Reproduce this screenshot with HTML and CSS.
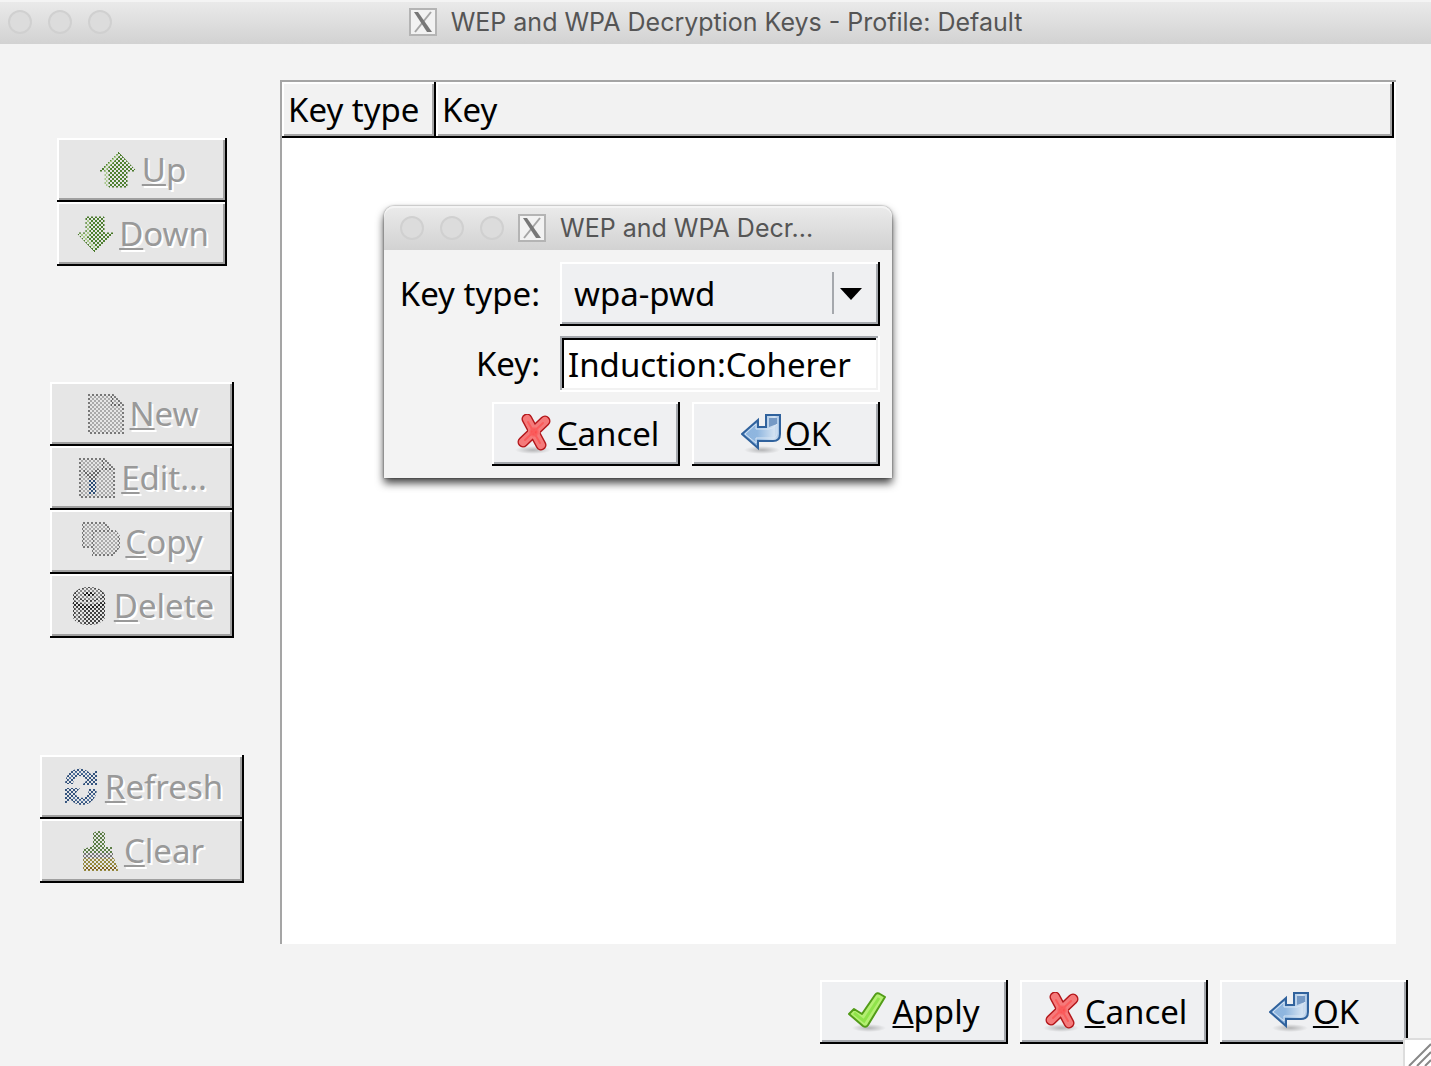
FILE: index.html
```html
<!DOCTYPE html>
<html lang="en">
<head>
    <meta charset="UTF-8">
    <meta name="viewport" content="width=device-width, initial-scale=1.0">
    <title>WEP and WPA Decryption Keys - Profile: Default</title>
    <link rel="stylesheet" href="styles.css">
</head>
<body>

    <!-- Shared icons -->
    <svg class="defs" width="0" height="0" aria-hidden="true">
        <defs>
            <linearGradient id="blue" x1="0" y1="0" x2="1" y2="0">
                <stop offset="0" stop-color="#8db4de"/>
                <stop offset="0.4" stop-color="#8fb6df"/>
                <stop offset="0.85" stop-color="#d3e2f2"/>
                <stop offset="1" stop-color="#9dbce0"/>
            </linearGradient>
            <radialGradient id="red">
                <stop offset="0" stop-color="#ff3535"/>
                <stop offset="1" stop-color="#f58080"/>
            </radialGradient>
            <radialGradient id="shade">
                <stop offset="0" stop-color="#000" stop-opacity="0.25"/>
                <stop offset="1" stop-color="#000" stop-opacity="0"/>
            </radialGradient>
        </defs>
        <symbol id="xlogo" viewBox="0 0 28 28">
            <rect x="1" y="1" width="26" height="26" fill="#f2f2f2" stroke="#b4b4b4" stroke-width="2"/>
            <path d="M22 4 6 24" stroke="#a5a5a5" stroke-width="2"/>
            <path d="M5 4h4l14 20h-5z" fill="#777"/>
        </symbol>
        <symbol id="cancel" viewBox="0 0 40 40">
            <ellipse cx="20" cy="36" rx="18" ry="4" fill="url(#shade)"/>
            <path d="M14 5 28 31M32 7 10 28" fill="none" stroke="#b3171b" stroke-width="11" stroke-linecap="round"/>
            <path d="M14 5 28 31M32 7 10 28" fill="none" stroke="#f57a7a" stroke-width="8" stroke-linecap="round"/>
            <circle cx="21" cy="18" r="6" fill="url(#red)"/>
            <path d="M15 8 27 29M30 9 12 26" fill="none" stroke="#fa5c5c" stroke-width="2" stroke-linecap="round"/>
        </symbol>
        <symbol id="ok" viewBox="0 0 40 40">
            <ellipse cx="21" cy="36" rx="18" ry="4" fill="url(#shade)"/>
            <path d="M1 20 17 6v7h8V1h14v19q0 7-7 7H17v7z" fill="url(#blue)" stroke="#30629d" stroke-width="2"/>
            <path d="M28 4h8v6l-8 3z" fill="#7599c5"/>
            <path d="M4 20 15 10v5h13q5 0 8-5v9q0 5-5 5H15v5z" fill="none" stroke="#d7e5f4" stroke-width="1"/>
        </symbol>
        <symbol id="apply" viewBox="0 0 40 40">
            <ellipse cx="21" cy="36" rx="17" ry="4" fill="url(#shade)"/>
            <path d="M1 22 6 17 14 22 27 3q2-3 5-1l5 3L20 33q-2 3-5 1z" fill="#b4ef72" stroke="#529c18" stroke-width="2" stroke-linejoin="round"/>
            <path d="M6 21 16 29 31 6" fill="none" stroke="#8fe34a" stroke-width="3"/>
        </symbol>
    </svg>

    <header class="titlebar">
        <div class="lights"><span></span><span></span><span></span></div>
        <svg class="xicon"><use href="#xlogo"/></svg>
        <h1>WEP and WPA Decryption Keys - Profile: Default</h1>
    </header>

    <main class="window">
        <div class="content">
            <!-- Left hand button groups -->
            <nav class="sidebar">
                <div class="group group-move">
                    <button class="btn" disabled>
                        <svg class="icon" viewBox="0 0 40 40"><path d="M20 2 38 21H29V37H11V21H2z" fill="#4e8030" stroke="#457524"/><path d="M20 5 8 18v18" fill="none" stroke="#a8c88b" stroke-width="3"/></svg>
                        <span><u>U</u>p</span>
                    </button>
                    <button class="btn" disabled>
                        <svg class="icon" viewBox="0 0 40 40"><path d="M20 38 38 19H29V3H11V19H2z" fill="#4e8030" stroke="#457524"/><path d="M13 6v15H7l13 13" fill="none" stroke="#a8c88b" stroke-width="3"/></svg>
                        <span><u>D</u>own</span>
                    </button>
                </div>
                <div class="group group-edit">
                    <button class="btn" disabled>
                        <svg class="icon" viewBox="0 0 40 40"><path d="M3 1h24l10 10v28H3z" fill="#a9a9a9" stroke="#777" stroke-width="2"/><path d="M6 4h19l9 9v23H6z" fill="#aaa"/><path d="M26 2v9h10" fill="none" stroke="#666" stroke-width="2"/></svg>
                        <span><u>N</u>ew</span>
                    </button>
                    <button class="btn" disabled>
                        <svg class="icon" viewBox="0 0 40 40"><path d="M3 1h24l10 10v28H3z" fill="#aaa" stroke="#777" stroke-width="2"/><path d="M26 2v9h10" fill="none" stroke="#666" stroke-width="2"/><path d="M6 10 13 15 20 10 24 13 19 21V24H12V21L7 16z" fill="#666"/><path d="M12 22h7v14h-7z" fill="#2c4d75"/></svg>
                        <span><u>E</u>dit...</span>
                    </button>
                    <button class="btn" disabled>
                        <svg class="icon" viewBox="0 0 40 40"><path d="M2 1h21l5 5v19H2z" fill="#aaa" stroke="#777" stroke-width="2"/><path d="M12 9h22l4 5v11l-6 8H12z" fill="#aaa" stroke="#777" stroke-width="2"/></svg>
                        <span><u>C</u>opy</span>
                    </button>
                    <button class="btn" disabled>
                        <svg class="icon" viewBox="0 0 40 40"><path d="M3 9v23q4 7 16 7t16-7V9q-4-8-16-8T3 9z" fill="#444"/><path d="M7 22v12M12 24v13" stroke="#888" stroke-width="3"/><ellipse cx="19" cy="8" rx="13" ry="6" fill="#888"/><ellipse cx="19" cy="8" rx="6" ry="2" fill="#111"/><path d="M3 17q16 9 32 0" fill="none" stroke="#222" stroke-width="3"/><path d="M4 13q15 8 30 0" fill="none" stroke="#aaa" stroke-width="2"/></svg>
                        <span><u>D</u>elete</span>
                    </button>
                </div>
                <div class="group group-reset">
                    <button class="btn" disabled>
                        <svg class="icon" viewBox="0 0 40 40"><path d="M4 17C5 0 22-2 30 7L36 3V18H21l5-5C19 6 13 9 12 17zM36 22C35 39 18 42 10 33l-6 4V21h15l-5 6c7 7 13 4 14-5z" fill="#35547e"/><path d="M8 14C11 3 22 3 28 10M32 26C29 36 18 36 12 30" fill="none" stroke="#5b7ba5" stroke-width="2"/></svg>
                        <span><u>R</u>efresh</span>
                    </button>
                    <button class="btn" disabled>
                        <svg class="icon" viewBox="0 0 40 40"><path d="M13 2q6-4 12 0v14h7v7H3v-5l10-3z" fill="#5b7d45"/><path d="M3 22h30v5H3z" fill="#777"/><path d="M3 27h31l5 13H3z" fill="#95883f"/><path d="M5 36h31v3H5z" fill="#806019"/></svg>
                        <span><u>C</u>lear</span>
                    </button>
                </div>
            </nav>

            <!-- Key list, no rows yet -->
            <section class="list">
                <table>
                    <thead>
                        <tr>
                            <th class="col-type">Key type</th>
                            <th>Key</th>
                        </tr>
                    </thead>
                </table>
            </section>
        </div>

        <footer class="actions">
            <button class="btn"><svg class="icon"><use href="#apply"/></svg><span><u>A</u>pply</span></button>
            <button class="btn"><svg class="icon"><use href="#cancel"/></svg><span><u>C</u>ancel</span></button>
            <button class="btn"><svg class="icon"><use href="#ok"/></svg><span><u>O</u>K</span></button>
        </footer>
    </main>

    <!-- New key dialog -->
    <div class="dialog" role="dialog" aria-labelledby="dialogTitle">
        <div class="titlebar">
            <div class="lights"><span></span><span></span><span></span></div>
            <svg class="xicon"><use href="#xlogo"/></svg>
            <h2 id="dialogTitle">WEP and WPA Decr...</h2>
        </div>
        <form class="dialog-form">
            <div class="field">
                <label for="keyType">Key type:</label>
                <div class="combo">
                    <select id="keyType">
                        <option>wep</option>
                        <option selected>wpa-pwd</option>
                        <option>wpa-psk</option>
                    </select>
                    <svg class="arrow" viewBox="0 0 32 44" aria-hidden="true"><path d="M0 1h2v42H0z" fill="#a5a8ad"/><path d="M8 17h22L19 29z"/></svg>
                </div>
            </div>
            <div class="field">
                <label for="key">Key:</label>
                <input type="text" id="key" value="Induction:Coherer">
            </div>
            <div class="dialog-actions">
                <button type="button" class="btn"><svg class="icon"><use href="#cancel"/></svg><span><u>C</u>ancel</span></button>
                <button type="button" class="btn"><svg class="icon"><use href="#ok"/></svg><span><u>O</u>K</span></button>
            </div>
        </form>
    </div>

    <svg class="grip" viewBox="0 0 28 28" aria-hidden="true">
        <path d="M0 28V0H28" fill="#fff" stroke="#ddd" stroke-width="4"/>
        <path d="M2 28V2H28V28z" fill="#fff"/>
        <path d="M6 28 28 6M14 28 28 14M22 28 28 22" stroke="#888" stroke-width="2"/>
    </svg>

</body>
</html>
```

FILE: styles.css
```css
* {
    box-sizing: border-box;
}
body {
    display: flex;
    flex-direction: column;
    min-height: 100vh;
    margin: 0;
    background-color: #f3f3f3;
    color: #000;
    font-family: "Noto Sans", sans-serif;
    font-size: 33px;
    line-height: 40px;
}
button, input, select {
    font: inherit;
    color: inherit;
    margin: 0;
    border: none;
    border-radius: 0;
}
u {
    text-decoration-thickness: 2px;
    text-underline-offset: 2px;
    text-decoration-skip-ink: none;
}
.defs {
    position: absolute;
}

/* Title bars */
.titlebar {
    display: flex;
    align-items: center;
    justify-content: center;
    gap: 14px;
    position: relative;
    height: 44px;
    background: linear-gradient(#ebebeb, #d2d2d2);
    box-shadow: inset 0 2px 0 #f4f4f4;
}
.titlebar h1, .titlebar h2 {
    margin: 0;
    color: #555;
    font-family: Inter, sans-serif;
    font-size: 25px;
    font-weight: 400;
    line-height: 32px;
}
.xicon {
    width: 28px;
    height: 28px;
}
.lights {
    display: flex;
    gap: 16px;
}
.lights span {
    width: 24px;
    height: 24px;
    border: 2px solid #d0d0d0;
    border-radius: 50%;
    background-color: #dcdcdc;
}
header .lights {
    position: absolute;
    left: 8px;
}

/* Main window */
.window {
    display: flex;
    flex: 1;
    flex-direction: column;
    gap: 36px;
    padding: 36px 23px 22px 40px;
}
.content {
    display: flex;
    flex: 1;
    gap: 36px;
    padding-right: 12px;
}
.sidebar {
    display: flex;
    flex-direction: column;
    justify-content: space-around;
    align-items: center;
    width: 204px;
    padding-bottom: 3px;
}
.group {
    display: flex;
    flex-direction: column;
}
.group-move {
    width: 170px;
}
.group-edit {
    width: 184px;
}
.group-reset {
    width: 204px;
}

.btn {
    display: flex;
    align-items: center;
    justify-content: center;
    gap: 4px;
    width: 188px;
    height: 64px;
    padding: 0;
    background-color: #eff0f2;
    box-shadow: inset -2px -2px 0 #000, inset 2px 2px 0 #fff, inset -4px -4px 0 #a5a8ad;
}
.group .btn {
    width: 100%;
}
.btn:disabled {
    background-color: #e6e6e6;
    box-shadow: inset -2px -2px 0 #000, inset 2px 2px 0 #fff, inset -4px -4px 0 #a0a0a0;
    color: #999;
    text-shadow: 2px 2px 0 #fff;
}
.icon {
    flex: none;
    width: 40px;
    height: 40px;
}
/* greyed out icons are stippled */
.btn:disabled .icon {
    -webkit-mask: repeating-conic-gradient(#000 0 25%, transparent 0 50%) 0 0 / 4px 4px;
    mask: repeating-conic-gradient(#000 0 25%, transparent 0 50%) 0 0 / 4px 4px;
}

.list {
    flex: 1;
    padding-right: 2px;
    border-top: 2px solid #a5a5a5;
    border-left: 2px solid #a5a5a5;
    background-color: #fff;
}
.list table {
    width: 100%;
    border-collapse: collapse;
    table-layout: fixed;
}
.list th {
    height: 56px;
    padding: 0 6px;
    background-color: #f2f2f2;
    box-shadow: inset -2px -2px 0 #000, inset 2px 2px 0 #fff, inset -4px -4px 0 #a5a5a5;
    font-weight: 400;
    text-align: left;
}
.list .col-type {
    width: 154px;
}
.actions, .dialog-actions {
    display: flex;
    justify-content: flex-end;
    gap: 12px;
}

/* Dialog floats over the list */
.dialog {
    position: absolute;
    top: 206px;
    left: 384px;
    width: 508px;
    border-radius: 10px 10px 0 0;
    background-color: #f3f3f3;
    box-shadow: 0 0 2px rgba(0, 0, 0, 0.5), 0 5px 9px rgba(0, 0, 0, 0.75);
}
.dialog .titlebar {
    justify-content: flex-start;
    padding-left: 16px;
    border-radius: 10px 10px 0 0;
}
.dialog-form {
    display: flex;
    flex-direction: column;
    gap: 10px;
    padding: 12px;
}
.field {
    display: flex;
    align-items: center;
    gap: 20px;
}
.field label {
    flex: 1;
    text-align: right;
    white-space: nowrap;
}
.combo {
    position: relative;
    width: 320px;
}
.combo select {
    display: block;
    width: 100%;
    height: 64px;
    padding: 0 50px 0 14px;
    appearance: none;
    background-color: #eff0f2;
    box-shadow: inset -2px -2px 0 #000, inset 2px 2px 0 #fff, inset -4px -4px 0 #a5a8ad;
}
.arrow {
    position: absolute;
    top: 9px;
    right: 16px;
    width: 32px;
    height: 44px;
    pointer-events: none;
}
.field input {
    width: 320px;
    height: 56px;
    padding: 0 8px;
    background-color: #fff;
    box-shadow: inset -2px -2px 0 #fff, inset 2px 2px 0 #a5a8ad, inset -4px -4px 0 #f2f2f2, inset 4px 4px 0 #000;
}

.grip {
    position: fixed;
    right: 0;
    bottom: 0;
    width: 28px;
    height: 28px;
}
```
